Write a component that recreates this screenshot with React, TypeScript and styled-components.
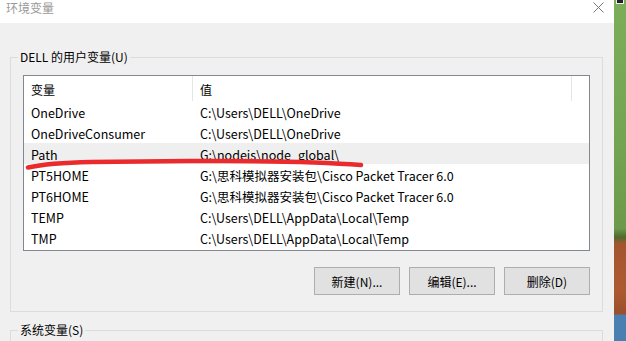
import * as React from 'react';
import styled, { createGlobalStyle, css } from 'styled-components';

const GlobalStyle = createGlobalStyle`
  html, body {
    margin: 0;
    padding: 0;
    width: 626px;
    height: 341px;
    overflow: hidden;
  }
  body {
    font-family: "Noto Sans CJK SC", "Noto Sans", sans-serif;
    font-size: 12px;
    color: #000;
  }
`;

const Screen = styled.div`
  display: flex;
  width: 626px;
  height: 341px;
  overflow: hidden;
`;

const Dialog = styled.div`
  width: 614px;
  flex-shrink: 0;
  display: flex;
  flex-direction: column;
  background: #f0f0f0;
  overflow: hidden;
`;

const Wallpaper = styled.div`
  flex: 1;
  position: relative;
  background: linear-gradient(
    180deg,
    #7cae5a 0%,
    #74a552 40%,
    #6c9a4a 67%,
    #4f6a30 69.5%,
    #a4552e 71.5%,
    #ad5a31 85%,
    #99502b 92%,
    #4a7fb2 92.5%,
    #4a7fb2 100%
  );
`;

const Corner = styled.div`
  position: absolute;
  left: 2px;
  top: 0;
  width: 6px;
  height: 3px;
  background: #222;
  border: 1px solid #eee;
  border-top: none;
`;

const TitleBar = styled.div`
  height: 23px;
  flex-shrink: 0;
  background: #fff;
  display: flex;
  align-items: flex-start;
  justify-content: space-between;
  padding: 0 10px 0 6px;
`;

const Title = styled.span`
  color: #9a9a9a;
  font-size: 12px;
  line-height: 16px;
`;

const Close = styled.span`
  width: 11px;
  height: 11px;
  margin-top: 2px;
  display: flex;
`;

const Body = styled.div`
  flex: 1;
  padding: 26px 11px 0 10px;
  display: flex;
  flex-direction: column;
  gap: 10px;
`;

const Group = styled.fieldset`
  margin: 0;
  flex-shrink: 0;
  border: 1px solid #dcdcdc;
  padding: 10px 12px 16px 12px;
  min-width: 0;
`;

const Legend = styled.legend`
  margin-left: -5px;
  padding: 0 2px;
  line-height: 16px;
  font-size: 12px;
  color: #000;
`;

const ListView = styled.div`
  position: relative;
  height: 174px;
  background: #fff;
  border: 1px solid #828790;
`;

const Header = styled.div`
  display: grid;
  grid-template-columns: 169px 379px;
  height: 25px;
`;

const HeaderCell = styled.div`
  display: flex;
  align-items: center;
  padding: 1px 0 0 7px;
  border-right: 1px solid #e5e5e5;
`;

const Row = styled.div<{ selected?: boolean }>`
  display: grid;
  grid-template-columns: 169px 379px;
  height: 21px;
  align-items: center;
  ${props =>
    props.selected &&
    css`
      background: #efefef;
    `}
`;

const Cell = styled.div`
  padding: 1px 0 0 7px;
  white-space: nowrap;
  overflow: hidden;
  font-size: 12.5px;
`;

const Mark = styled.svg`
  position: absolute;
  left: 0;
  top: 0;
  pointer-events: none;
`;

const Buttons = styled.div`
  display: flex;
  justify-content: flex-end;
  gap: 9px;
  margin-top: 16px;
`;

const Button = styled.button`
  width: 86px;
  height: 28px;
  background: #e1e1e1;
  border: 1px solid #adadad;
  font-family: inherit;
  font-size: 12px;
  color: #000;
  padding: 0;
`;

const SystemGroup = styled(Group)`
  height: 40px;
`;

const rows = [
  { name: 'OneDrive', value: 'C:\\Users\\DELL\\OneDrive' },
  { name: 'OneDriveConsumer', value: 'C:\\Users\\DELL\\OneDrive' },
  { name: 'Path', value: 'G:\\nodejs\\node_global\\', selected: true },
  { name: 'PT5HOME', value: 'G:\\思科模拟器安装包\\Cisco Packet Tracer 6.0' },
  { name: 'PT6HOME', value: 'G:\\思科模拟器安装包\\Cisco Packet Tracer 6.0' },
  { name: 'TEMP', value: 'C:\\Users\\DELL\\AppData\\Local\\Temp' },
  { name: 'TMP', value: 'C:\\Users\\DELL\\AppData\\Local\\Temp' },
];

const App: React.FC = () => {
  return (
    <Screen>
      <GlobalStyle />
      <Dialog>
        <TitleBar>
          <Title>环境变量</Title>
          <Close>
            <svg width="11" height="11" viewBox="0 0 11 11">
              <path d="M0.5 0.5L10.5 10.5M10.5 0.5L0.5 10.5" stroke="#777" strokeWidth="1" />
            </svg>
          </Close>
        </TitleBar>
        <Body>
          <Group>
            <Legend>DELL 的用户变量(U)</Legend>
            <ListView>
              <Header>
                <HeaderCell>变量</HeaderCell>
                <HeaderCell>值</HeaderCell>
              </Header>
              {rows.map(r => (
                <Row key={r.name} selected={r.selected}>
                  <Cell>{r.name}</Cell>
                  <Cell>{r.value}</Cell>
                </Row>
              ))}
              <Mark width="567" height="174" viewBox="0 0 567 174">
                <path
                  d="M4 91.5 C 20 88, 45 86.5, 67 86 S 150 85, 200 85 S 300 86, 337 89"
                  stroke="#ea2a2c"
                  strokeWidth="4.5"
                  strokeLinecap="round"
                  fill="none"
                />
              </Mark>
            </ListView>
            <Buttons>
              <Button>新建(N)...</Button>
              <Button>编辑(E)...</Button>
              <Button>删除(D)</Button>
            </Buttons>
          </Group>
          <SystemGroup>
            <Legend>系统变量(S)</Legend>
          </SystemGroup>
        </Body>
      </Dialog>
      <Wallpaper>
        <Corner />
      </Wallpaper>
    </Screen>
  );
};

export default App;
